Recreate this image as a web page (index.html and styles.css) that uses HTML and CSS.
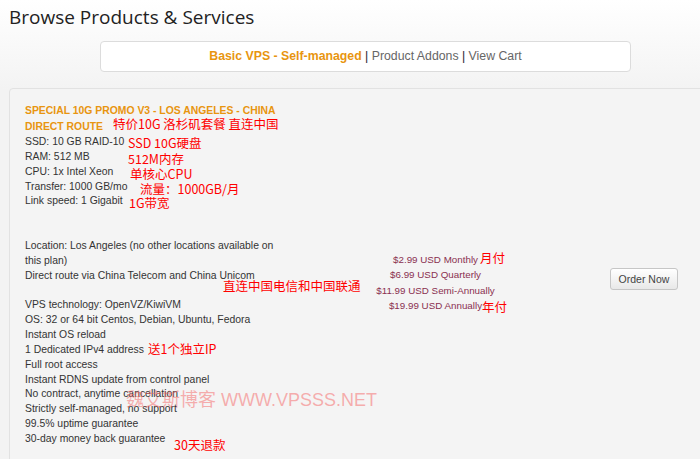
FILE: index.html
```html
<!DOCTYPE html>
<html lang="en">
<head>
    <meta charset="UTF-8">
    <title>Browse Products &amp; Services</title>
    <link rel="stylesheet" href="styles.css">
</head>
<body>
    <h1 class="page-title">Browse Products &amp; Services</h1>

    <div class="cat-nav">
        <b class="current">Basic VPS - Self-managed</b> <span class="sep">|</span>
        <a href="#">Product Addons</a> <span class="sep">|</span>
        <a href="#">View Cart</a>
    </div>

    <div class="product">
        <div class="desc">
            <div class="name">Special 10G Promo V3 - Los Angeles - China Direct Route</div>
            SSD: 10 GB RAID-10<br>
            RAM: 512 MB<br>
            CPU: 1x Intel Xeon<br>
            Transfer: 1000 GB/mo<br>
            Link speed: 1 Gigabit<br>
            <br>
            <br>
            Location: Los Angeles (no other locations available on this plan)<br>
            Direct route via China Telecom and China Unicom<br>
            <br>
            VPS technology: OpenVZ/KiwiVM<br>
            OS: 32 or 64 bit Centos, Debian, Ubuntu, Fedora<br>
            Instant OS reload<br>
            1 Dedicated IPv4 address<br>
            Full root access<br>
            Instant RDNS update from control panel<br>
            No contract, anytime cancellation<br>
            Strictly self-managed, no support<br>
            99.5% uptime guarantee<br>
            30-day money back guarantee
        </div>
        <div class="pricing">
            $2.99 USD Monthly<br>
            $6.99 USD Quarterly<br>
            $11.99 USD Semi-Annually<br>
            $19.99 USD Annually
        </div>
        <div class="order">
            <button class="order-btn">Order Now</button>
        </div>

        <!-- notes written on top of the listing -->
        <span class="note" style="left:103px;top:28px">特价10G 洛杉矶套餐 直连中国</span>
        <span class="note" style="left:118px;top:47px">SSD 10G硬盘</span>
        <span class="note" style="left:118px;top:63px">512M内存</span>
        <span class="note" style="left:120px;top:78px">单核心CPU</span>
        <span class="note" style="left:130px;top:93px">流量：1000GB/月</span>
        <span class="note" style="left:119px;top:107px">1G带宽</span>
        <span class="note" style="left:213px;top:190px">直连中国电信和中国联通</span>
        <span class="note" style="left:138px;top:253px">送1个独立IP</span>
        <span class="note" style="left:164px;top:349px">30天退款</span>
        <span class="note" style="left:470px;top:162px">月付</span>
        <span class="note" style="left:472px;top:211px">年付</span>
        <span class="watermark" style="left:116px;top:302px">魏艾斯博客 WWW.VPSSS.NET</span>
    </div>
</body>
</html>
```

FILE: styles.css
```css
body {
    margin: 0;
    background: linear-gradient(#ffffff, #f3f3f3 90px) no-repeat #f3f3f3;
    font-family: "Liberation Sans", Arial, sans-serif;
    color: #333;
    overflow: hidden;
}
.page-title {
    margin: 0;
    padding: 3px 0 0 9px;
    font-family: "Open Sans", sans-serif;
    font-weight: normal;
    font-size: 19px;
    line-height: 28px;
    color: #222;
}
.cat-nav {
    margin: 10px 0 0 100px;
    width: 529px;
    height: 29px;
    line-height: 29px;
    background: #fff;
    border: 1px solid #dcdcdc;
    border-radius: 4px;
    text-align: center;
    font-size: 12.3px;
}
.cat-nav .current {
    color: #e8950f;
}
.cat-nav .sep {
    color: #223;
}
.cat-nav a {
    color: #666;
    text-decoration: none;
}
.product {
    position: relative;
    display: flex;
    align-items: flex-start;
    margin: 16px 0 0 9px;
    width: 730px;
    height: 420px;
    padding: 14px 15px;
    background: #f4f4f4;
    border: 1px solid #e2e2e2;
    border-radius: 4px;
    font-size: 10.4px;
    line-height: 14.85px;
}
.desc {
    width: 258px;
    margin-right: 10px;
    flex: none;
    color: #333;
}
.name {
    color: #e8950f;
    font-weight: bold;
    text-transform: uppercase;
    line-height: 16px;
}
.pricing {
    width: 285px;
    flex: none;
    padding-top: 149px;
    font-size: 9.8px;
    line-height: 15.3px;
    text-align: center;
    color: #8a3050;
}
.order {
    width: 132px;
    flex: none;
    padding-top: 165px;
    text-align: center;
}
.order-btn {
    width: 68px;
    height: 22px;
    padding: 0;
    font-family: "Liberation Sans", Arial, sans-serif;
    font-size: 10.5px;
    color: #444;
    background: linear-gradient(#ffffff, #e8e8e8);
    border: 1px solid #c6c6c6;
    border-radius: 3px;
}
.note {
    position: absolute;
    font-family: "Noto Sans CJK SC", sans-serif;
    font-size: 12.5px;
    line-height: 13px;
    color: #f00;
    white-space: nowrap;
}
.watermark {
    position: absolute;
    font-family: "Liberation Sans", "Noto Sans CJK SC", sans-serif;
    font-size: 18px;
    line-height: 18px;
    color: rgba(245, 100, 100, 0.5);
    white-space: nowrap;
}
```
